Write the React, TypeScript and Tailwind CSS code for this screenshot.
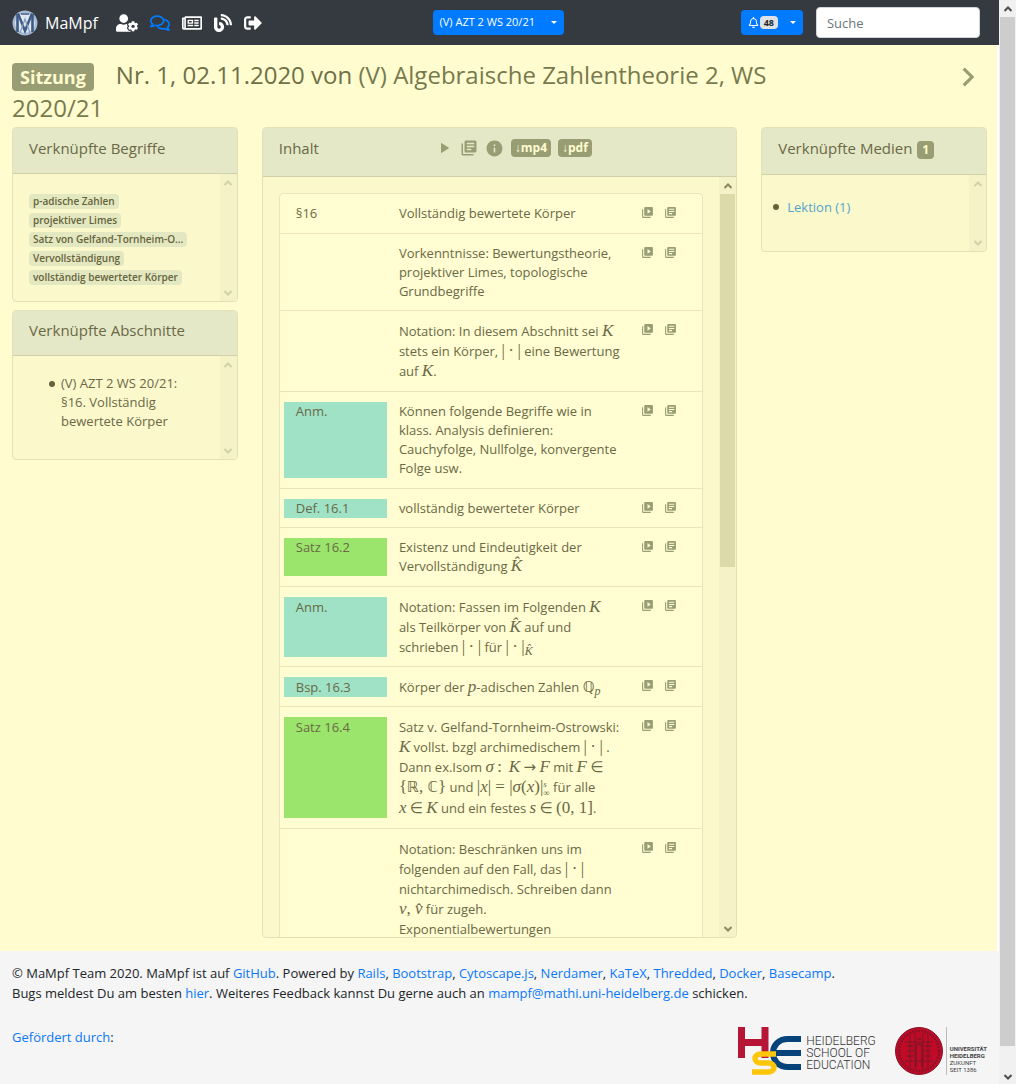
import { ReactNode } from "react";
import { FaUserCog, FaRegComments, FaRegNewspaper, FaBlog, FaSignOutAlt, FaRegBell } from "react-icons/fa";
import { MdChevronRight, MdInfo, MdLibraryBooks, MdPlayArrow, MdVideoLibrary } from "react-icons/md";

const M = ({ children }: { children: ReactNode }) => (
  <span className="font-['Liberation_Serif'] text-[17px] leading-none italic">{children}</span>
);
const R = ({ children }: { children: ReactNode }) => (
  <span className="font-['Liberation_Serif'] text-[17px] leading-none">{children}</span>
);
const B = ({ children }: { children: ReactNode }) => (
  <span className="font-['DejaVu_Sans'] text-[15px] leading-none">{children}</span>
);
const Norm = () => <R>|&thinsp;·&thinsp;|</R>;
const Sub = ({ children }: { children: ReactNode }) => (
  <sub className="font-['Liberation_Serif'] text-[12px] leading-none italic">{children}</sub>
);

type Row = { label?: string; tone?: string; compact?: boolean; math?: boolean; text: ReactNode };

const teal = "bg-[#9fe2c6]";
const green = "bg-[#9be56c]";

const rows: Row[] = [
  { label: "§16", text: "Vollständig bewertete Körper" },
  { compact: true, text: <>Vorkenntnisse: Bewertungstheorie,<br />projektiver Limes, topologische<br />Grundbegriffe</> },
  { math: true, text: <>Notation: In diesem Abschnitt sei <M>K</M><br />stets ein Körper, <Norm /> eine Bewertung<br />auf <M>K</M>.</> },
  { label: "Anm.", tone: teal, text: <>Können folgende Begriffe wie in<br />klass. Analysis definieren:<br />Cauchyfolge, Nullfolge, konvergente<br />Folge usw.</> },
  { label: "Def. 16.1", tone: teal, compact: true, text: "vollständig bewerteter Körper" },
  { label: "Satz 16.2", tone: green, text: <>Existenz und Eindeutigkeit der<br />Vervollständigung <M>K̂</M></> },
  { label: "Anm.", tone: teal, compact: true, math: true, text: <>Notation: Fassen im Folgenden <M>K</M><br />als Teilkörper von <M>K̂</M> auf und<br />schrieben <Norm /> für <Norm /><Sub>K̂</Sub></> },
  { label: "Bsp. 16.3", tone: teal, compact: true, math: true, text: <>Körper der <M>p</M>-adischen Zahlen <B>ℚ</B><Sub>p</Sub></> },
  {
    label: "Satz 16.4", tone: green, math: true,
    text: (
      <>
        Satz v. Gelfand-Tornheim-Ostrowski:<br />
        <M>K</M> vollst. bzgl archimedischem <Norm /> .<br />
        Dann ex.Isom <M>σ</M><R>&thinsp;:&thinsp;</R> <M>K</M> <B>→</B> <M>F</M> mit <M>F</M> <B>∈</B><br />
        <R>{"{"}</R><B>ℝ</B><R>, </R><B>ℂ</B><R>{"}"}</R> und <R>|</R><M>x</M><R>| = |</R><M>σ</M><R>(</R><M>x</M><R>)|</R>
        <span className="inline-flex flex-col align-middle font-['Liberation_Serif'] text-[9px] leading-[9px]">
          <i>s</i><span>∞</span>
        </span> für alle<br />
        <M>x</M> <B>∈</B> <M>K</M> und ein festes <M>s</M> <B>∈</B> <R>(0, 1]</R>.
      </>
    ),
  },
  {
    math: true,
    text: (
      <>Notation: Beschränken uns im<br />folgenden auf den Fall, das <Norm /><br />nichtarchimedisch. Schreiben dann<br /><M>v</M><R>, </R><M>v̂</M> für zugeh.<br />Exponentialbewertungen</>
    ),
  },
];

function Arrow({ down = false, className }: { down?: boolean; className: string }) {
  return (
    <svg viewBox="0 0 8 6" className={`h-[6px] w-2 ${className}`} fill="none" stroke="currentColor" strokeWidth="2" aria-hidden>
      <path d={down ? "M0.5 1 4 4.5 7.5 1" : "M0.5 5 4 1.5 7.5 5"} />
    </svg>
  );
}

function Track({ thumb = false }: { thumb?: boolean }) {
  const tone = thumb ? "text-[#8b8a60]" : "text-[#d3d1a8]";
  return (
    <div className="flex w-[17px] shrink-0 flex-col items-center justify-between bg-[#f5f2c8]">
      <div className="flex h-[17px] shrink-0 items-center"><Arrow className={tone} /></div>
      {thumb && <div className="w-[15px] basis-[373px] bg-[#dddaaa]" />}
      {thumb && <div className="flex-1" />}
      <div className="flex h-[17px] shrink-0 items-center"><Arrow down className={tone} /></div>
    </div>
  );
}

function Card({ title, className = "", headClass, children, thumb }: { title: ReactNode; className?: string; headClass: string; children: ReactNode; thumb?: boolean }) {
  return (
    <section className={`flex flex-col overflow-hidden rounded border border-[#e3e1b8] bg-[#fbf8cc] ${className}`}>
      <h2 className={`shrink-0 border-b border-[#d0d1ab] bg-[#e4e8c6] px-4 text-[15px] leading-6 ${headClass}`}>{title}</h2>
      <div className="flex min-h-0 flex-1">
        <div className="min-w-0 flex-1 overflow-hidden">{children}</div>
        <Track thumb={thumb} />
      </div>
    </section>
  );
}

const Dot = () => <span className="mt-[7px] size-[6px] shrink-0 rounded-full bg-[#64633c]" />;

const tags = ["p-adische Zahlen", "projektiver Limes", "Satz von Gelfand-Tornheim-O...", "Vervollständigung", "vollständig bewerteter Körper"];
const credits = ["Rails", "Bootstrap", "Cytoscape.js", "Nerdamer", "KaTeX", "Thredded", "Docker", "Basecamp"];

const Caret = () => <span className="border-x-[3px] border-t-[3px] border-x-transparent border-t-white" />;

function Link({ children }: { children: ReactNode }) {
  return <a href="#" className="text-[#0a78fa]">{children}</a>;
}

export default function App() {
  return (
    <div className="flex bg-white font-['Open_Sans',sans-serif] text-[13px] text-[#6a6947]">
      <div className="min-w-0 flex-1">
        <nav className="flex h-[45px] items-center bg-[#343a40] px-3 text-white">
          <a href="#" className="flex items-center gap-[7px] text-[16px]">
            <svg viewBox="0 0 26 26" className="size-[26px]" aria-hidden>
              <circle cx="13" cy="13" r="12.5" fill="#a9bbd3" />
              <circle cx="13" cy="13" r="10" fill="#dfe6ef" />
              <path d="M5.500 4v18M20.500 4v18" stroke="#3d5a87" strokeWidth="2.6" />
              <path d="M6 3.500 13 21 20 3.500" fill="none" stroke="#3d5a87" strokeWidth="2.4" />
              <path d="M8 23 13 9 18 23" fill="none" stroke="#8299ba" strokeWidth="1.2" />
              <path d="M9 4h8" stroke="#3d5a87" strokeWidth="1.5" />
            </svg>
            MaMpf
          </a>
          <div className="ml-[18px] flex items-center gap-3">
            <a href="#" aria-label="Profil"><FaUserCog className="h-[18px] w-[22px]" /></a>
            <a href="#" aria-label="Kommentare" className="text-[#007bff]"><FaRegComments className="size-5" /></a>
            <a href="#" aria-label="Neuigkeiten"><FaRegNewspaper className="size-5" /></a>
            <a href="#" aria-label="Blog"><FaBlog className="size-[18px]" /></a>
            <a href="#" aria-label="Abmelden"><FaSignOutAlt className="size-[18px]" /></a>
          </div>
          <button className="mr-[6px] ml-auto flex h-[25px] items-center gap-4 rounded-sm bg-[#007bff] px-[7px] text-[11px]">
            (V) AZT 2 WS 20/21 <Caret />
          </button>
          <button className="ml-auto flex h-[25px] items-center rounded-sm bg-[#007bff] px-[7px]" aria-label="Benachrichtigungen">
            <FaRegBell className="size-[11px]" />
            <span className="mr-3 ml-px rounded-sm bg-[#dee2e6] px-1 text-[9px] leading-[13px] font-bold text-[#212529]">48</span>
            <Caret />
          </button>
          <input aria-label="Suche" placeholder="Suche" className="mr-[7px] ml-[13px] h-[31px] w-[164px] rounded border border-[#ced4da] bg-white px-[10px] text-[13px] text-gray-700 placeholder:text-[#6c757d]" />
        </nav>

        <main className="mr-0.5 h-[906px] bg-[#fffccf]">
          <header className="flex items-start justify-between px-3 pt-[13px]">
            <h1 className="max-w-[790px] text-[24px] leading-[33px] text-[#6f7048]">
              <span className="mr-[22px] inline-block rounded bg-[#999d74] px-2 text-[18px] leading-7 font-bold text-[#fffccf]">Sitzung</span>
              Nr. 1, 02.11.2020 von <a href="#" className="text-[#777a4e]">(V) Algebraische Zahlentheorie 2, WS<br />2020/21</a>
            </h1>
            <a href="#" aria-label="Weiter" className="-mr-0.5 text-[#999d74]"><MdChevronRight className="size-[38px]" /></a>
          </header>

          <div className="-mr-0.5 grid grid-cols-12 items-start pt-[3px]">
            <div className="col-span-3 flex flex-col gap-2 px-3">
              <Card title="Verknüpfte Begriffe" headClass="h-[46px] pt-2" className="h-[175px]">
                <ul className="flex flex-col items-start gap-1 px-4 pt-5">
                  {tags.map((t) => (
                    <li key={t}><a href="#" className="block rounded bg-[#e4e8c0] px-1 text-[10px] leading-[15px] font-semibold whitespace-nowrap text-[#64633c]">{t}</a></li>
                  ))}
                </ul>
              </Card>
              <Card title="Verknüpfte Abschnitte" headClass="h-[45px] pt-[7px]" className="h-[150px]">
                <ul className="pt-[18px] pl-9 leading-[19px] whitespace-nowrap">
                  <li className="flex gap-[6px]"><Dot /><span>(V) AZT 2 WS 20/21:<br />§16. Vollständig<br />bewertete Körper</span></li>
                </ul>
              </Card>
            </div>

            <div className="col-span-6 px-3">
              <Card
                thumb
                className="h-[811px]"
                headClass="h-[49px] pt-2"
                title={
                  <span className="flex items-center">
                    <span className="w-[156px]">Inhalt</span>
                    <span className="flex items-center gap-[7px] text-[#999d74]">
                      <a href="#" aria-label="Abspielen"><MdPlayArrow className="size-[18px]" /></a>
                      <a href="#" aria-label="Manuskript"><MdLibraryBooks className="size-[18px]" /></a>
                      <a href="#" aria-label="Info"><MdInfo className="size-[19px]" /></a>
                      <a href="#" className="rounded bg-[#999d74] px-1 text-[12px] leading-[18px] font-bold text-[#fffccf]">↓mp4</a>
                      <a href="#" className="rounded bg-[#999d74] px-1 text-[12px] leading-[18px] font-bold text-[#fffccf]">↓pdf</a>
                    </span>
                  </span>
                }
              >
                <ul className="mx-4 mt-4 rounded border border-[#e8e5bb] bg-[#fffdd1]">
                  {rows.map((r, i) => (
                    <li key={i} className={`grid grid-cols-12 border-b border-[#e8e5bb] pr-[6px] pl-1 pt-[10px] ${r.compact ? "pb-[9px]" : "pb-[10px]"} ${r.math ? "leading-5" : "leading-[19px]"}`}>
                      <div className={`col-span-3 px-3 ${r.tone ?? ""}`}>{r.label}</div>
                      <div className="col-span-7 px-3 whitespace-nowrap">{r.text}</div>
                      <div className="col-span-2 flex items-start gap-[10px] pt-[2px] pl-[13px] text-[#999d74]">
                        <a href="#" aria-label="Video"><MdVideoLibrary className="size-[13px]" /></a>
                        <a href="#" aria-label="Manuskript"><MdLibraryBooks className="size-[13px]" /></a>
                      </div>
                    </li>
                  ))}
                </ul>
              </Card>
            </div>

            <div className="col-span-3 px-3">
              <Card
                title={<>Verknüpfte Medien <span className="ml-px inline-block rounded bg-[#999d74] px-[5px] text-[12px] leading-[18px] font-bold text-[#fffccf]">1</span></>}
                headClass="h-[47px] pt-2"
                className="h-[125px]"
              >
                <ul className="pt-[22px] pl-[11px] leading-5">
                  <li className="flex gap-2"><Dot /><a href="#" className="text-[#55a5c8]">Lektion (1)</a></li>
                </ul>
              </Card>
            </div>
          </div>
        </main>

        <footer className="h-[133px] bg-[#f5f5f5] px-3 pt-3 leading-5 text-[#212529]">
          <p>
            © MaMpf Team 2020. MaMpf ist auf <Link>GitHub</Link>. Powered by{" "}
            {credits.map((c, i) => (
              <span key={c}><Link>{c}</Link>{i < credits.length - 1 ? ", " : "."}</span>
            ))}
          </p>
          <p>Bugs meldest Du am besten <Link>hier</Link>. Weiteres Feedback kannst Du gerne auch an <Link>mampf@mathi.uni-heidelberg.de</Link> schicken.</p>
          <div className="mt-6 flex justify-between">
            <p><Link>Gefördert durch</Link>:</p>
            <div className="flex gap-[19px]">
              <a href="#" className="flex gap-[5px]">
                <svg viewBox="0 0 63 48" className="h-12 w-[63px]" fill="none" aria-hidden>
                  <path d="M3.500 0v31M27 0v31M0 15.500h30" stroke="#b71535" strokeWidth="7" />
                  <path d="M63 12H50c-20 0-20 28 0 28h13M38 26h25" stroke="#06437a" strokeWidth="6" />
                  <path d="M38 27H23c-8 0-8 9 0 9h7c8 0 8 9 0 9H14" stroke="#fdc60b" strokeWidth="5.500" />
                </svg>
                <span className="pt-2 font-[Roboto] text-[12px] leading-[12px] font-light text-[#333]">HEIDELBERG<br />SCHOOL OF<br />EDUCATION</span>
              </a>
              <a href="#" className="flex">
                <svg viewBox="0 0 48 48" className="size-12" fill="none" stroke="#7d1626" aria-hidden>
                  <circle cx="24" cy="24" r="23.500" fill="#c00a27" />
                  <circle cx="24" cy="24" r="20" strokeWidth="2.500" strokeDasharray="1.5 1.500" />
                  <path d="M15 8v32M20 6v36M28 6v36M33 8v32M10 15h28M12 24h8M28 24h8M10 34h28" strokeWidth="1" />
                  <path d="M21 40V20a3 3 0 0 1 6 0v20M22 12h4M12 19h6M30 19h6M12 29h6M30 29h6" strokeWidth="1.500" />
                </svg>
                <span className="ml-[3px] border-l border-[#bbb] pt-[18px] pl-[3px] font-[Roboto] text-[6px] leading-[7px] text-[#444]"><b>UNIVERSITÄT<br />HEIDELBERG</b><br />ZUKUNFT<br />SEIT 1386</span>
              </a>
            </div>
          </div>
        </footer>
      </div>

      <div className="flex w-[17px] shrink-0 flex-col items-center bg-[#f1f1f1]">
        <div className="flex h-[17px] shrink-0 items-center"><Arrow className="text-[#505050]" /></div>
        <div className="w-[15px] flex-1 bg-[#cdcdcd]" />
        <div className="flex h-[38px] shrink-0 flex-col justify-end pb-[4px]"><Arrow down className="text-[#505050]" /></div>
      </div>
    </div>
  );
}
